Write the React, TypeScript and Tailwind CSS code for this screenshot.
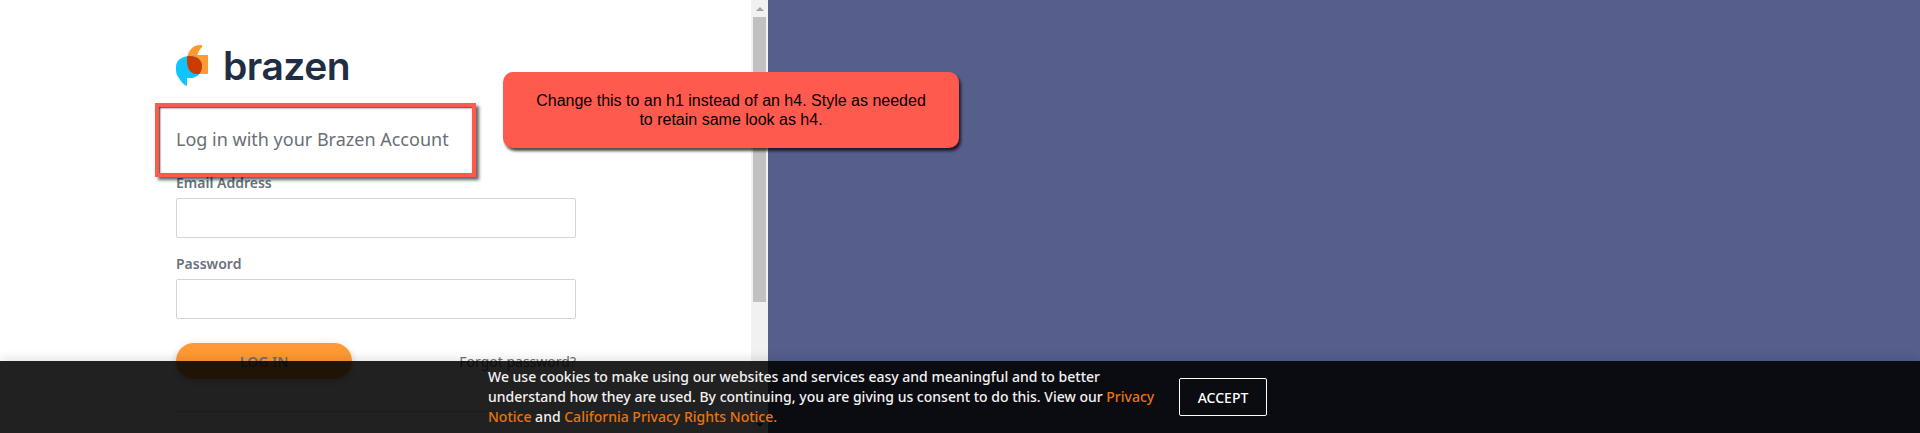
const inputClass = "block h-10 w-full rounded-[2px] border border-[#d4d4d4] bg-white"
const labelClass = "block text-[14px] leading-5 font-semibold text-[#6b7280]"

function BrazenLogo() {
  return (
    <div className="flex items-center gap-[14px]">
      <svg width="33" height="41" viewBox="0 0 33 41" className="shrink-0">
        <path
          d="M16 3 C18 0.5 22 0 26 0 L26 2 C24 4 22 7 21.5 10 L32 10 L32 29 L21 29 C13 29 11 22 11 16 C11 10 13 6 16 3 Z"
          fill="#ff9a33"
        />
        <path
          d="M14 11 C21 11 26 15 26 21 C26 28 21 33 15 33 L11 33 L11 41 C8 40 5 37 3 33 C0 30 0 26 0 22 C0 15 6 11 14 11 Z"
          fill="#10c5ff"
        />
        <path
          d="M11 11.5 C12 11 13 11 14 11 C21 11 26 15 26 21 C26 24 25 27 23.5 29 L21 29 C13 29 11 22 11 16 Z"
          fill="#cc3b00"
        />
      </svg>
      <span className="font-['Inter',sans-serif] text-[39px] leading-none font-semibold tracking-[-0.5px] text-[#1f2d45]">
        brazen
      </span>
    </div>
  )
}

function LoginForm() {
  return (
    <div className="h-full w-[751px] bg-white pt-[45px] pl-[176px] pr-[175px]">
      <BrazenLogo />
      <h1 className="mt-[41px] text-[18px] leading-[24px] font-normal text-[#6b6f76]">
        Log in with your Brazen Account
      </h1>
      <label className={`${labelClass} mt-[22px]`}>Email Address</label>
      <div className="mt-[5px]">
        <input className={inputClass} />
      </div>
      <label className={`${labelClass} mt-[16px]`}>Password</label>
      <div className="mt-[5px]">
        <input className={inputClass} />
      </div>
      <div className="mt-6 flex items-center justify-between">
        <button className="h-9 w-[176px] rounded-full bg-[#ff9933] text-[14px] font-semibold text-[#6b6f76] shadow-[0_3px_8px_rgba(0,0,0,0.2)]">
          LOG IN
        </button>
        <a className="text-[14px] text-[#6b6f76]">Forgot password?</a>
      </div>
      <div className="mt-[32px] border-t border-[#d4d4d4]" />
    </div>
  )
}

function Scrollbar() {
  return (
    <div className="flex h-full w-[17px] flex-col items-center bg-[#f1f1f1]">
      <div className="flex h-[17px] items-center justify-center">
        <div className="h-0 w-0 border-x-[4px] border-b-[4px] border-x-transparent border-b-[#a3a3a3]" />
      </div>
      <div className="h-[285px] w-[13px] bg-[#c1c1c1]" />
      <div className="mt-auto flex h-[17px] items-center justify-center">
        <div className="h-0 w-0 border-x-[4px] border-t-[4px] border-x-transparent border-t-[#505050]" />
      </div>
    </div>
  )
}

function CookieBanner() {
  return (
    <div className="absolute inset-x-0 top-[361px] flex h-[72px] items-center bg-black/87 pl-[488px] shadow-[0_-2px_10px_rgba(0,0,0,0.12)]">
      <p className="w-[691px] text-[14px] leading-5 font-medium text-[#f2f2f2]">
        We use cookies to make using our websites and services easy and meaningful and to better understand how they
        are used. By continuing, you are giving us consent to do this. View our{" "}
        <a className="text-[#e8750a]">Privacy Notice</a> and{" "}
        <a className="text-[#e8750a]">California Privacy Rights Notice.</a>
      </p>
      <button className="h-[38px] w-[88px] ml-0 rounded-[2px] border border-white text-[14px] font-medium text-white">
        ACCEPT
      </button>
    </div>
  )
}

export default function App() {
  return (
    <div className="relative flex h-[433px] w-[1920px] overflow-hidden bg-[#565e8c] font-['Noto_Sans',sans-serif]">
      <LoginForm />
      <Scrollbar />

      {/* review annotation */}
      <div className="absolute top-[103px] left-[155px] h-[74px] w-[321px] border-[4px] border-[#ff5a4d] shadow-[inset_1px_1px_2px_rgba(0,0,0,0.8),3px_3px_3px_rgba(0,0,0,0.6)]" />
      <div className="absolute top-[72px] left-[503px] flex h-[76px] w-[456px] items-center justify-center rounded-[10px] bg-[#ff5a4d] px-8 text-center font-['Liberation_Sans',sans-serif] text-[16px] leading-[19px] text-black shadow-[2px_3px_3px_rgba(0,0,0,0.7)]">
        Change this to an h1 instead of an h4. Style as needed to retain same look as h4.
      </div>

      <CookieBanner />
    </div>
  )
}
